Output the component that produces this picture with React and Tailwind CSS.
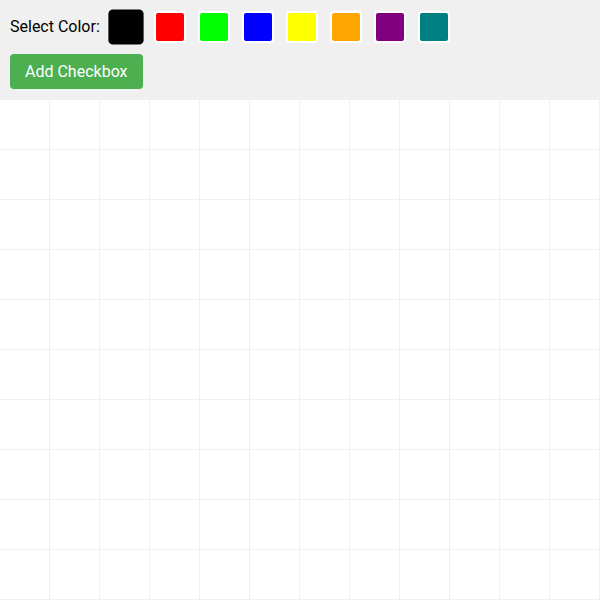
import { useState } from 'react';

const COLORS = ['#000000', '#ff0000', '#00ff00', '#0000ff', '#ffff00', '#ffa500', '#800080', '#008080'];

export default function App() {
  const [selected, setSelected] = useState('#000000');
  const cells = Array.from({ length: 120 });

  return (
    <div className="w-[600px] h-[600px] overflow-hidden bg-white font-['Roboto',sans-serif]">
      <div className="bg-[#f0f0f0] h-[100px] px-[10px] pt-[10px]">
        <div className="flex items-center h-[34px]">
          <span className="text-[16px] text-black mr-[10px]">Select Color:</span>
          <div className="flex items-center gap-3">
            {COLORS.map((c) => (
              <button
                key={c}
                onClick={() => setSelected(c)}
                className={
                  selected === c
                    ? 'w-8 h-8 rounded border-2 border-black scale-110'
                    : 'w-8 h-8 rounded border-2 border-white'
                }
                style={{ backgroundColor: c }}
              />
            ))}
          </div>
        </div>
        <button className="mt-[10px] h-[35px] px-[15px] rounded bg-[#4caf50] text-white text-[16px]">
          Add Checkbox
        </button>
      </div>
      <div className="grid grid-cols-[repeat(12,50px)]">
        {cells.map((_, i) => (
          <div key={i} className="h-[50px] border-r border-b border-[#f0f0f0]" />
        ))}
      </div>
    </div>
  );
}
